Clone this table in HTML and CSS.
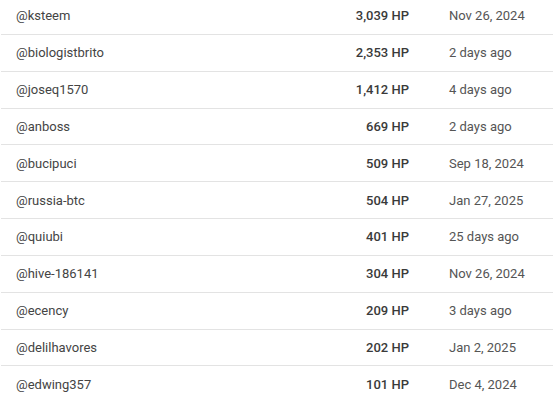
FILE: index.html
```html
<!DOCTYPE html>
<html>
<head>
<meta charset="utf-8">
<link rel="stylesheet" href="styles.css">
</head>
<body>
<div class="list">
  <div class="row"><span class="user">@ksteem</span><span class="hp">3,039 HP</span><span class="date">Nov 26, 2024</span></div>
  <div class="row"><span class="user">@biologistbrito</span><span class="hp">2,353 HP</span><span class="date">2 days ago</span></div>
  <div class="row"><span class="user">@joseq1570</span><span class="hp">1,412 HP</span><span class="date">4 days ago</span></div>
  <div class="row"><span class="user">@anboss</span><span class="hp">669 HP</span><span class="date">2 days ago</span></div>
  <div class="row"><span class="user">@bucipuci</span><span class="hp">509 HP</span><span class="date">Sep 18, 2024</span></div>
  <div class="row"><span class="user">@russia-btc</span><span class="hp">504 HP</span><span class="date">Jan 27, 2025</span></div>
  <div class="row"><span class="user">@quiubi</span><span class="hp">401 HP</span><span class="date">25 days ago</span></div>
  <div class="row"><span class="user">@hive-186141</span><span class="hp">304 HP</span><span class="date">Nov 26, 2024</span></div>
  <div class="row"><span class="user">@ecency</span><span class="hp">209 HP</span><span class="date">3 days ago</span></div>
  <div class="row"><span class="user">@delilhavores</span><span class="hp">202 HP</span><span class="date">Jan 2, 2025</span></div>
  <div class="row"><span class="user">@edwing357</span><span class="hp">101 HP</span><span class="date">Dec 4, 2024</span></div>
</div>
</body>
</html>
```
FILE: styles.css
```css
html, body {
  margin: 0;
  padding: 0;
  background: #ffffff;
  overflow: hidden;
}
body {
  font-family: Roboto, "Liberation Sans", sans-serif;
  font-size: 13px;
  color: #3a3a3a;
}
.list {
  margin-top: -2px;
  margin-left: 1px;
}
.row {
  display: grid;
  grid-template-columns: 1fr 90px 104px;
  column-gap: 40px;
  align-items: center;
  height: 36.85px;
  box-sizing: border-box;
  padding-left: 15px;
  border-bottom: 1px solid #e3e3e3;
}
.user {
  color: #444;
}
.hp {
  text-align: right;
  font-weight: 500;
  color: #3a3a3a;
}
.date {
  color: #555;
}
```
